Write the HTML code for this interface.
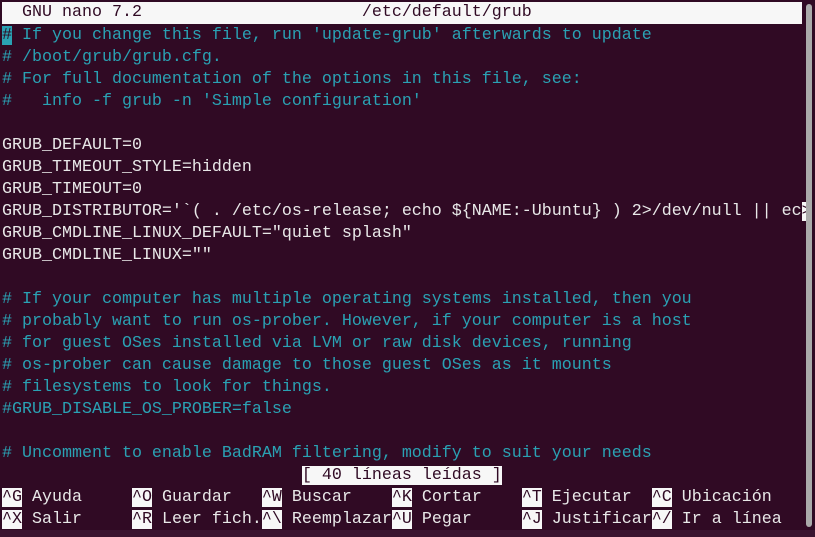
<!DOCTYPE html>
<html><head><meta charset="utf-8"><style>
html,body{margin:0;padding:0;width:815px;height:537px;background:#300a24;overflow:hidden}
.r{position:absolute;left:2px;height:22px;line-height:22px;white-space:pre;font-family:"Liberation Mono",monospace;font-size:16.67px;color:#e8e8e8;margin-top:1px}
.c{color:#2aa1b3}
.inv{background:#f7f7f7;color:#300a24}
.cur{background:#2aa1b3;color:#300a24}
#title{position:absolute;left:2px;top:2px;width:800px;height:22px;background:#f7f7f7}
#sb{position:absolute;left:806px;top:4px;width:6px;height:523px;background:#aaa;border-radius:3px}
#bot{position:absolute;left:0;top:530px;width:815px;height:7px;background:#3a1530}
</style></head><body>
<div id="title"></div>
<div class="r" style="top:1px;color:#300a24">  GNU nano 7.2                      /etc/default/grub</div>
<div class="r c" style="top:24px"><span class="cur">#</span> If you change this file, run 'update-grub' afterwards to update</div>
<div class="r c" style="top:46px"># /boot/grub/grub.cfg.</div>
<div class="r c" style="top:68px"># For full documentation of the options in this file, see:</div>
<div class="r c" style="top:90px">#   info -f grub -n 'Simple configuration'</div>
<div class="r" style="top:134px">GRUB_DEFAULT=0</div>
<div class="r" style="top:156px">GRUB_TIMEOUT_STYLE=hidden</div>
<div class="r" style="top:178px">GRUB_TIMEOUT=0</div>
<div class="r" style="top:200px">GRUB_DISTRIBUTOR='`( . /etc/os-release; echo ${NAME:-Ubuntu} ) 2&gt;/dev/null || ec<span class="inv">&gt;</span></div>
<div class="r" style="top:222px">GRUB_CMDLINE_LINUX_DEFAULT="quiet splash"</div>
<div class="r" style="top:244px">GRUB_CMDLINE_LINUX=""</div>
<div class="r c" style="top:288px"># If your computer has multiple operating systems installed, then you</div>
<div class="r c" style="top:310px"># probably want to run os-prober. However, if your computer is a host</div>
<div class="r c" style="top:332px"># for guest OSes installed via LVM or raw disk devices, running</div>
<div class="r c" style="top:354px"># os-prober can cause damage to those guest OSes as it mounts</div>
<div class="r c" style="top:376px"># filesystems to look for things.</div>
<div class="r c" style="top:398px">#GRUB_DISABLE_OS_PROBER=false</div>
<div class="r c" style="top:442px"># Uncomment to enable BadRAM filtering, modify to suit your needs</div>
<div class="r" style="top:464px">                              <span class="inv">[ 40 líneas leídas ]</span></div>
<div class="r" style="top:486px"><span class="inv">^G</span> Ayuda     <span class="inv">^O</span> Guardar   <span class="inv">^W</span> Buscar    <span class="inv">^K</span> Cortar    <span class="inv">^T</span> Ejecutar  <span class="inv">^C</span> Ubicación</div>
<div class="r" style="top:508px"><span class="inv">^X</span> Salir     <span class="inv">^R</span> Leer fich.<span class="inv">^\</span> Reemplazar<span class="inv">^U</span> Pegar     <span class="inv">^J</span> Justificar<span class="inv">^/</span> Ir a línea</div>
<div id="sb"></div>
<div id="bot"></div>
</body></html>
